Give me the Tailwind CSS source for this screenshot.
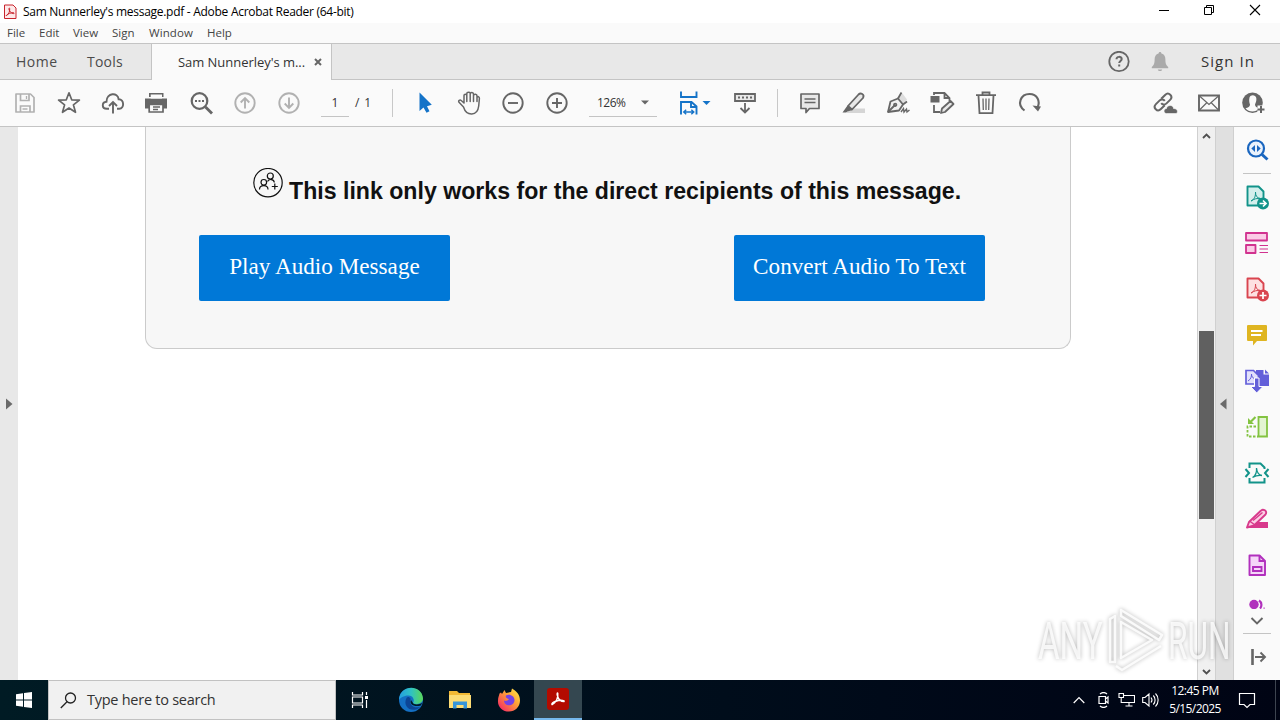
<!DOCTYPE html>
<html lang="en">
<head>
    <meta charset="UTF-8">
    <meta name="viewport" content="width=device-width, initial-scale=1.0">
    <title>Sam Nunnerley's message.pdf - Adobe Acrobat Reader (64-bit)</title>

    <!-- Tailwind CSS -->
    <script src="https://cdn.jsdelivr.net/npm/@tailwindcss/browser@4"></script>
</head>
<body class="w-[1280px] h-[720px] overflow-hidden flex flex-col bg-white font-['Open_Sans','Noto_Sans',sans-serif] text-[#333]">

    <!-- Title bar -->
    <header class="h-[23px] shrink-0 flex items-center justify-between bg-white text-black">
        <div class="flex items-center pl-[3px]">
            <svg class="w-[14px] h-[16px]" viewBox="0 0 14 16">
                <path d="M1.5 1h8.500L13 4v10.500H1.500z" fill="#fde9e9" stroke="#c8232c" stroke-linejoin="round"/>
                <path d="M3.500 11.500c2-1 3.500-4 3.200-6.800-.1-1-1-.8-.8.300.5 2.500 2.300 4.400 4.600 4.600 1.200 0 .8-1-.4-.9-2.300.1-4.800.9-6.400 2.300-.8.800-.7 1.200-.2.500z" fill="none" stroke="#c8232c"/>
            </svg>
            <span class="ml-[6px] text-[12px] leading-[22px] tracking-[-0.28px] whitespace-nowrap">Sam Nunnerley's message.pdf - Adobe Acrobat Reader (64-bit)</span>
        </div>
        <div class="flex items-center pr-[2px] pb-[3px]">
            <svg class="w-[45px] h-[20px]" viewBox="0 0 45 20"><path d="M18 10.500h10" stroke="#000"/></svg>
            <svg class="w-[46px] h-[20px]" viewBox="0 0 46 20" fill="none" stroke="#000"><path d="M18.500 7.500h7v7h-7zM20.500 7.500v-2h7v7h-2"/></svg>
            <svg class="w-[46px] h-[20px]" viewBox="0 0 46 20"><path d="M18 5l10 10M28 5L18 15" stroke="#000" stroke-width="1.100"/></svg>
        </div>
    </header>

    <!-- Menu -->
    <nav class="h-[20px] shrink-0 flex items-center bg-[#fafafa] pl-[7px] text-[11.5px] text-[#444] whitespace-nowrap">
        <span class="w-[32px]">File</span>
        <span class="w-[34px]">Edit</span>
        <span class="w-[39px]">View</span>
        <span class="w-[37px]">Sign</span>
        <span class="w-[58px] tracking-[0.1px]">Window</span>
        <span>Help</span>
    </nav>

    <!-- Tabs -->
    <div class="h-[37px] shrink-0 flex bg-[#e8e8e8] border-y border-[#c4c4c4] whitespace-nowrap">
        <div class="w-[72px] pl-[16px] flex items-center text-[14px] tracking-[0.5px] text-[#4b4b4b]">Home</div>
        <div class="w-[79px] pl-[15px] flex items-center text-[14px] tracking-[0.2px] text-[#4b4b4b]">Tools</div>
        <div class="w-[181px] h-[36px] flex items-center bg-[#fafafa] border-x border-[#c4c4c4] pl-[26px]">
            <span class="w-[136px] pt-px text-[13px] tracking-[-0.04px]">Sam Nunnerley's m...</span>
            <svg class="w-[8px] h-[8px]" viewBox="0 0 8 8"><path d="M1 1l6 6M7 1L1 7" stroke="#666" stroke-width="2"/></svg>
        </div>
        <div class="ml-auto flex items-center pr-[25px]">
            <svg class="w-[22px] h-[22px]" viewBox="0 0 22 22">
                <circle cx="11" cy="10.500" r="9.700" fill="none" stroke="#666" stroke-width="1.800"/>
                <path d="M8.500 8.300c0-3.200 5.200-3.200 5.200-.2 0 1.900-2.500 2-2.500 4" fill="none" stroke="#666" stroke-width="2"/>
                <path d="M10.200 13.500h2v2h-2z" fill="#666"/>
            </svg>
            <svg class="w-[20px] h-[22px] ml-[20px]" viewBox="0 0 20 22">
                <path d="M10 1c.9 0 1.400.7 1.400 1.500 3 .8 4 3 4 6 0 4 .6 5.500 2.800 7.500v1.300H1.800V16C4 14 4.600 12.500 4.600 8.500c0-3 1-5.200 4-6C8.600 1.700 9.100 1 10 1zM7.800 18.500h4.400c-.4 2-4 2-4.400 0z" fill="#aaa"/>
            </svg>
            <span class="ml-[31px] text-[15px] tracking-[1.050px]">Sign In</span>
        </div>
    </div>

    <!-- Toolbar -->
    <div class="h-[47px] shrink-0 flex items-center bg-[#fafafa] border-b border-[#c4c4c4] pl-[3px] pr-[5px]">
        <!-- save -->
        <svg class="w-[44px] h-[24px]" viewBox="-22 -12 44 24" fill="none" stroke="#b1b1b1" stroke-width="1.700">
            <path d="M-9 -9H5.500L9 -5.500V9H-9z" stroke-linejoin="round"/>
            <path d="M-4.500 -9v6.500H4V-9M-4.500 9V3H5v6"/><path d="M1.500 -7v3M-2.500 6h5" stroke-width="1.300"/>
        </svg>
        <!-- star -->
        <svg class="w-[44px] h-[24px]" viewBox="-22 -12 44 24">
            <path d="M0 -10.200L2.700 -3.200L10.400 -2.900L4.400 1.800L6.500 9.300L0 5L-6.500 9.300L-4.400 1.800L-10.400 -2.900L-2.700 -3.200z" fill="none" stroke="#666" stroke-width="1.700" stroke-linejoin="round"/>
        </svg>
        <!-- upload -->
        <svg class="w-[44px] h-[24px]" viewBox="-22 -12 44 24" fill="none" stroke="#666" stroke-width="1.900">
            <path d="M-4 5.800h-2.200C-11.500 5.800 -11.500 -1 -6.500 -1.300C-6.500 -10.500 5 -11 5.600 -3.800C11.500 -4 11.500 5.800 6.300 5.800H4"/>
            <path d="M0 10.500V-1M-4 3L0 -1L4 3"/>
        </svg>
        <!-- print -->
        <svg class="w-[44px] h-[24px]" viewBox="-21 -12 44 24">
            <path d="M-7 -10H7.500v4H-7zM-11 -4.500H11V5.500H-11z" fill="#666"/>
            <path d="M-5.300 -8.500H6v4H-5.300z" fill="#fafafa"/>
            <path d="M-6.800 1.500H7v7.500H-6.800z" fill="#fafafa" stroke="#666" stroke-width="1.700"/>
            <path d="M-3 4h7M-3 6.500h5" stroke="#666" stroke-width="1.300"/>
        </svg>
        <!-- find -->
        <svg class="w-[44px] h-[24px]" viewBox="-22 -12 44 24">
            <circle cx="-1.500" cy="-2" r="7.800" fill="none" stroke="#666" stroke-width="2.200"/>
            <path d="M4.500 4L11 10.500" stroke="#666" stroke-width="2.800"/>
            <path d="M-6 -3h2v2h-2zM-2.500 -3h2v2h-2zM1 -3h2v2h-2z" fill="#666"/>
        </svg>
        <!-- previous / next page -->
        <svg class="w-[44px] h-[24px]" viewBox="-22 -12 44 24" fill="none" stroke="#b1b1b1" stroke-width="1.900">
            <circle r="9.700"/><path d="M0 5.500V-4.500M-4.300 -.5L0 -4.800L4.300 -.5"/>
        </svg>
        <svg class="w-[44px] h-[24px]" viewBox="-22 -12 44 24" fill="none" stroke="#b1b1b1" stroke-width="1.900">
            <circle r="9.700"/><path d="M0 -5.500V4.500M-4.300 .5L0 4.800L4.300 .5"/>
        </svg>
        <div class="ml-[10px] w-[28px] h-[28px] border-b border-[#c4c4c4] text-center text-[12px] leading-[27px]">1</div>
        <div class="ml-[6px] w-[37px] text-[12px] tracking-[0.9px]">/ 1</div>
        <div class="w-px h-[28px] bg-[#c8c8c8]"></div>
        <!-- select -->
        <svg class="ml-[10px] w-[44px] h-[24px]" viewBox="-22 -12 44 24">
            <path d="M-5.500 -10.500V8L-1.500 4.500L1.500 9.800L4.500 8.200L2 3.300L6.800 1.800z" fill="#1473c8"/>
        </svg>
        <!-- hand -->
        <svg class="w-[44px] h-[24px]" viewBox="-22 -12 44 24" fill="none" stroke="#666" stroke-width="1.500" stroke-linecap="round" stroke-linejoin="round">
            <path d="M-5.500 4L-10 -.7C-11.200 -2.500 -9 -3.500 -7.800 -2.500L-5 0V-7.500C-5 -9.300 -2.200 -9.300 -2.200 -7.500V-1.500M-2.200 -7.500V-9.500C-2.200 -11.300 1.200 -11.300 1.200 -9.500V-1.500M1.200 -9C1.300 -11 4.500 -10.800 4.500 -8.700V-1.500M4.500 -7.500C5 -9.500 8 -9 8 -7V-1.500M8 -5.500C8.500 -7 10.500 -6.500 10.400 -4.500L9.700 3C8.500 13.500 -2.500 13.500 -5.500 4"/>
        </svg>
        <!-- zoom out / in -->
        <svg class="w-[44px] h-[24px]" viewBox="-22 -12 44 24" fill="none" stroke="#666" stroke-width="1.900">
            <circle r="9.700"/><path d="M-5 0H5"/>
        </svg>
        <svg class="w-[44px] h-[24px]" viewBox="-22 -12 44 24" fill="none" stroke="#666" stroke-width="1.900">
            <circle r="9.700"/><path d="M-5 0H5M0 -5V5"/>
        </svg>
        <div class="ml-[10px] w-[68px] h-[28px] flex items-center border-b border-[#c4c4c4]">
            <span class="pl-[8px] w-[52px] text-[12px] tracking-[-0.5px]">126%</span>
            <svg class="w-[8px] h-[5px]" viewBox="0 0 8 5"><path d="M0 .5h8L4 4.500z" fill="#666"/></svg>
        </div>
        <!-- fit width -->
        <svg class="ml-[22px] w-[32px] h-[26px]" viewBox="0 0 32 26" fill="none" stroke="#1473c8" stroke-width="1.900">
            <path d="M2 1.500V7h15.500V1.500M2 24.500V12h10.500l5 4.500V24.500M12 12v5h5.500"/>
            <path d="M5 22h9.500M7.200 19.700L4.700 22L7.200 24.300M12.300 19.700L14.800 22L12.300 24.300" stroke-width="1.400"/>
            <path d="M23.500 11h8L27.500 15z" fill="#1473c8" stroke="none"/>
        </svg>
        <!-- read mode -->
        <svg class="ml-[12px] w-[44px] h-[24px]" viewBox="-22 -12 44 24" fill="none" stroke="#666" stroke-width="1.800">
            <path d="M-10 -9H10V-2H-10z" fill="#e8e8e8"/><path d="M-7 -5.500H7.500" stroke-dasharray="2 2"/>
            <path d="M0 0V9.500M-4.500 5L0 9.500L4.500 5"/>
        </svg>
        <div class="ml-[10px] w-px h-[28px] bg-[#c8c8c8]"></div>
        <!-- comment -->
        <svg class="ml-[10px] w-[44px] h-[24px]" viewBox="-22 -12 44 24" fill="none" stroke="#666" stroke-width="1.700">
            <path d="M-9 -9H9V5.500H-.5L-4 9.500V5.500H-9z" fill="#e8e8e8" stroke-linejoin="round"/><path d="M-5.500 -4h11M-5.500 -.500h11" stroke-width="1.300"/>
        </svg>
        <!-- highlight -->
        <svg class="w-[44px] h-[24px]" viewBox="-22 -12 44 24">
            <path d="M-3 5.500H11V10H-8z" fill="#d5d5d5"/>
            <path d="M-6 3L4.500 -8.500C6.500 -10.500 11 -9 9 -5L-2 6.500z" fill="#e8e8e8" stroke="#666" stroke-width="1.800" stroke-linejoin="round"/>
            <path d="M-6.500 2.500L-1.500 7L-6.500 8.500L-8 9.500H-11.500z" fill="#666"/>
        </svg>
        <!-- sign -->
        <svg class="w-[44px] h-[24px]" viewBox="-22 -12 44 24" fill="none" stroke="#666" stroke-width="1.800">
            <path d="M0 -4.500L4.500 -9.500L9 -3.500L5 1.500" fill="#ddd" stroke="none"/>
            <path d="M-10 9L-7.500 -1.500L0 -4.500L5 1.500L1 7.500z" fill="#f0f0f0" stroke-linejoin="round"/>
            <path d="M0 -4.500L3.500 -10.500M5 1.500L9 -1.500M-10 9L-3.500 2.500"/><circle cx="-2.800" cy="1.800" r="1.200"/>
            <path d="M3 9l2.500-3.500.5 3.500 2.500-3 .5 3 2.500-2" stroke-width="1.400"/>
        </svg>
        <!-- edit pdf -->
        <svg class="w-[44px] h-[24px]" viewBox="-22 -12 44 24" fill="none" stroke="#666" stroke-width="1.800">
            <path d="M-8 -8V-10H2.500L7.500 -5V-2M2.500 -10V-5H7.500M-8 2V9H-2"/>
            <path d="M-11.500 -7H-2.500V-.500H-11.500z" fill="#666" stroke="none"/>
            <path d="M0 5.500L8.500 -2L11.500 1L3 9L-1 10z" fill="#e8e8e8" stroke-linejoin="round"/>
        </svg>
        <!-- delete -->
        <svg class="w-[44px] h-[24px]" viewBox="-22 -12 44 24" fill="none" stroke="#666" stroke-width="1.800">
            <path d="M-10 -7.800H10M-3.500 -8V-10.500H3.500V-8M-7.500 -7.500L-6.500 10.200H6.500L7.500 -7.500"/><path d="M-3 -4.500L-2.700 7M0 -4.500V7M3 -4.500L2.700 7" stroke-width="1.300"/>
        </svg>
        <!-- rotate -->
        <svg class="w-[44px] h-[24px]" viewBox="-22 -12 44 24">
            <path d="M-5.500 7.500C-14 1 -9 -9 -.5 -9C7.500 -9 10.500 -1.500 7.500 4.500" fill="none" stroke="#666" stroke-width="2.100"/><path d="M2.500 2.500L11 3.500L8 8.500z" fill="#666"/>
        </svg>
        <!-- share link -->
        <svg class="ml-auto w-[44px] h-[24px]" viewBox="-22 -12 44 24">
            <g transform="rotate(-45 -2 -1)" fill="none" stroke="#666" stroke-width="2">
                <path d="M-3 2.500H-8.500C-13.500 2.500 -13.500 -4.500 -8.500 -4.500H-3.500C-.8 -4.500 .3 -2.500 0 -.5"/>
                <path d="M-1 -4.500H4.500C9.500 -4.500 9.500 2.500 4.500 2.500H-.5C-3.200 2.500 -4.300 .5 -4 -1.500"/>
            </g>
            <path d="M1.500 10.500C-1.500 10.500 -2 6 1.500 5.500C2 1.500 8.500 1.500 8.500 5.500C13.500 5.500 13 10.500 11 10.500z" fill="#666" stroke="#fafafa" stroke-width=".6"/>
        </svg>
        <!-- mail -->
        <svg class="w-[44px] h-[24px]" viewBox="-22 -12 44 24" fill="none" stroke="#666">
            <path d="M-10 -7.500H10V7.500H-10z" stroke-width="1.900"/><path d="M-9.500 -7L0 1.500L9.500 -7M-9.500 7L-2.500 0M9.500 7L2.500 0" stroke-width="1.200"/>
        </svg>
        <!-- add person -->
        <svg class="w-[44px] h-[24px]" viewBox="-22 -12 44 24">
            <circle cx="-.5" cy="-.3" r="10.300" fill="#666"/>
            <path d="M-3.500 -5.500C-2.500 -8.500 2.500 -8.500 3.300 -5C3.800 -2 2.500 0 2 1.500C2 4 4 4.500 6 5.200C3 9.500 -4 9.500 -7.500 5.200C-5 4.500 -3 4 -3 1.500C-3.500 0 -4.300 -2.500 -3.500 -5.500z" fill="#fafafa"/>
            <path d="M4.500 2.500h8v8h-8z" fill="#fafafa"/><path d="M4.500 6.500h7M8 3v7" stroke="#666" stroke-width="2"/>
        </svg>
    </div>

    <!-- Document area -->
    <main class="h-[553px] shrink-0 flex">
        <div class="w-[18px] shrink-0 bg-[#e8e8e8] flex items-center pl-[6px]">
            <svg class="w-[7px] h-[12px]" viewBox="0 0 7 12"><path d="M0 .5L6.500 6L0 11.500z" fill="#6a6a6a"/></svg>
        </div>

        <!-- Page -->
        <div class="w-[1179px] shrink-0 bg-white pl-[127px]">
            <section class="w-[926px] h-[222px] bg-[#f7f7f7] border border-t-0 border-[#cbcbcb] rounded-b-[12px] pl-[53px]">
                <div class="h-[108px] pt-[41px] pl-[54px] flex items-start">
                    <svg class="w-[30px] h-[30px] shrink-0" viewBox="0 0 30 30" fill="none" stroke="#111" stroke-width="1.200">
                        <circle cx="15" cy="14.700" r="14.200"/>
                        <circle cx="17.300" cy="8" r="3"/><circle cx="10.800" cy="14.300" r="2.800"/>
                        <path d="M6.500 21.500C6.500 16.300 15 16.300 15 21.500M14.500 13.500C16 10.500 21 11 21.300 14.500M21.800 15.500v6M18.800 18.500h6"/>
                    </svg>
                    <h2 class="ml-[6px] mt-[10px] font-['Liberation_Sans',Arial,sans-serif] font-bold text-[23.130px] leading-[26px] text-[#111] whitespace-nowrap">This link only works for the direct recipients of this message.</h2>
                </div>
                <div class="flex gap-[284px] font-['Liberation_Serif','Times_New_Roman',serif] text-[23.180px] text-white whitespace-nowrap">
                    <div class="w-[251px] h-[66px] rounded-[2px] bg-[#0078d7] flex items-center justify-center pb-[3px]">Play Audio Message</div>
                    <div class="w-[251px] h-[66px] rounded-[2px] bg-[#0078d7] flex items-center justify-center pb-[3px]">Convert Audio To Text</div>
                </div>
            </section>
        </div>

        <!-- Scrollbar -->
        <div class="w-[19px] shrink-0 bg-[#f0f0f0] border-x border-[#d0d0d0] flex flex-col items-start pl-px">
            <svg class="w-[9px] h-[6px] mt-[6px] ml-[3px]" viewBox="0 0 9 6"><path d="M1 5L4.500 1.500L8 5" fill="none" stroke="#505050" stroke-width="1.800"/></svg>
            <div class="mt-[192px] w-[15px] h-[188px] bg-[#606060]"></div>
            <svg class="w-[9px] h-[6px] mt-auto mb-[5px] ml-[3px]" viewBox="0 0 9 6"><path d="M1 1L4.500 4.500L8 1" fill="none" stroke="#505050" stroke-width="1.800"/></svg>
        </div>
        <div class="w-[18px] shrink-0 bg-[#e0e0e0] border-r border-[#cfcfcf] flex items-center pl-[4px]">
            <svg class="w-[7px] h-[12px]" viewBox="0 0 7 12"><path d="M6.500 .5L0 6l6.500 5.500z" fill="#6a6a6a"/></svg>
        </div>

        <!-- Tools pane -->
        <aside class="w-[46px] shrink-0 bg-[#fafafa] flex flex-col items-center">
            <svg class="w-[46px] h-[46px]" viewBox="-23 -23 46 46">
                <circle cx="-1" cy="-1.500" r="8" fill="#eaf2fc" stroke="#1a66bf" stroke-width="2.200"/>
                <path d="M5 4.500L10.500 9.500" stroke="#1a66bf" stroke-width="3"/><path d="M-2 -5v7L-5.700 -1.500zM0 -5v7L3.700 -1.500z" fill="#1a66bf"/>
            </svg>
            <div class="w-[28px] h-px bg-[#c4c4c4]"></div>
            <!-- export -->
            <svg class="w-[46px] h-[46px]" viewBox="-23 -23 46 46">
                <path d="M-9.500 -10.500H1.500L6.500 -5.500V8.500H-9.500z" fill="#d3efec" stroke="#12938a" stroke-width="1.900" stroke-linejoin="round"/>
                <path d="M-6 4C-2 2 -1.500 -1 -1.500 -5C-1.500 -1 0 1 3.500 1.500C0 1 -3 2 -6 4z" fill="none" stroke="#12938a"/>
                <circle cx="6" cy="6.500" r="6" fill="#12938a"/><path d="M2.500 6.500H8.500M6 3.500L9 6.500L6 9.500" fill="none" stroke="#fff" stroke-width="1.700"/>
            </svg>
            <!-- organize -->
            <svg class="w-[46px] h-[46px]" viewBox="-23 -23 46 46">
                <path d="M-11 -10H10V-2.500H-11zM-11 2H-1.500V10H-11z" fill="#fbcbe6" stroke="#d1328f" stroke-width="1.800" stroke-linejoin="round"/>
                <path d="M2.500 2.500h8.500M2.500 6h8.500M2.500 9.500h8.500" stroke="#d1328f"/>
            </svg>
            <!-- create -->
            <svg class="w-[46px] h-[46px]" viewBox="-23 -23 46 46">
                <path d="M-9.500 -10.500H1.500L6.500 -5.500V8.500H-9.500z" fill="#fde0e1" stroke="#d9444f" stroke-width="1.900" stroke-linejoin="round"/>
                <path d="M-6 4C-2 2 -1.500 -1 -1.500 -5C-1.500 -1 0 1 3.500 1.500C0 1 -3 2 -6 4z" fill="none" stroke="#d9444f"/>
                <circle cx="6" cy="6.500" r="6" fill="#d9444f"/><path d="M2.500 6.500H9.500M6 3V10" stroke="#fff" stroke-width="1.700"/>
            </svg>
            <!-- comment -->
            <svg class="w-[46px] h-[46px]" viewBox="-23 -23 46 46">
                <path d="M-9 -10H9C10 -10 10 -9 10 -9V5C10 6 9 6 9 6H0L-4 10.500V6H-9C-10 6 -10 5 -10 5V-9C-10 -10 -9 -10 -9 -10z" fill="#dfb521"/><path d="M-6 -4H5.500M-6 0H4" stroke="#fff" stroke-width="1.800"/>
            </svg>
            <!-- combine -->
            <svg class="w-[46px] h-[46px]" viewBox="-23 -23 46 46">
                <path d="M-1 -11H6.500V-6.500H12V5H-1z" fill="#635fd9"/><path d="M8 -11.500L12 -7.500H8z" fill="#635fd9"/>
                <path d="M-11 -10.500H-3.500L1.500 -5.500V3H-11z" fill="#e2e1fb" stroke="#635fd9" stroke-width="1.700"/>
                <path d="M-9 0C-6 -2 -5.500 -4 -5.500 -7C-5.500 -4 -4 -2.500 -1 -2" fill="none" stroke="#635fd9"/>
                <path d="M-2.500 -3H2V5.500H6L-.300 12L-6.500 5.500H-2.500z" fill="#635fd9" stroke="#fff" stroke-width="1"/>
            </svg>
            <!-- compare -->
            <svg class="w-[46px] h-[46px]" viewBox="-23 -23 46 46" fill="none" stroke="#83c341" stroke-width="1.800">
                <path d="M1.500 -10H10V9.500H1.500z" fill="#e3f4d2"/><path d="M-1 -.500H-9.500V9.500H1" stroke-dasharray="2.500 1.500"/>
                <path d="M-1.500 -10L-6 -5.500" stroke-width="2.200"/><path d="M-9 -9V-3H-3z" fill="#83c341" stroke="none"/>
            </svg>
            <!-- compress -->
            <svg class="w-[46px] h-[46px]" viewBox="-23 -23 46 46" fill="none" stroke="#12938a" stroke-width="2">
                <path d="M-7.500 -5V-9.500H3.500L7.500 -5.500V-4M-7.500 5V9.500H7.500V5"/>
                <path d="M-11.500 -4L-8 0L-11.500 4M11.500 -4L8 0L11.500 4"/>
                <path d="M-4.500 4.500C-1 2.500 0 0 -.5 -5C0 0 1.500 2 5 2.500C1 2 -2 3 -4.500 4.500z" stroke-width="1.300"/>
            </svg>
            <!-- redact -->
            <svg class="w-[46px] h-[46px]" viewBox="-23 -23 46 46">
                <path d="M1 3H11V9H-11z" fill="#d83a8c"/>
                <path d="M-8 3L3.500 -8C6 -11 11 -8 8.500 -4.500L-3 6.500L-10 8.500z" fill="#fbd0e5" stroke="#d83a8c" stroke-width="1.900" stroke-linejoin="round"/><path d="M-7.500 2L-2 6M-4 1.500L5.500 -6.500" stroke="#d83a8c" stroke-width="1.500"/>
            </svg>
            <!-- fill form -->
            <svg class="w-[46px] h-[46px]" viewBox="-23 -23 46 46" fill="none" stroke="#b130bd" stroke-width="1.900">
                <path d="M-7.500 -9.500H2.500L8 -4V10H-7.500z" fill="#f5d6f8" stroke-linejoin="round"/><path d="M2.500 -9.500V-4H8M-4 2H4.500V6H-4z"/>
            </svg>
            <!-- partly hidden tool -->
            <svg class="mt-[11px] w-[46px] h-[10px]" viewBox="-23 -5.500 46 10">
                <circle cx="-3" cy="0" r="4.700" fill="#b130bd"/><path d="M2 -4C5 -2 5 2 3 4" fill="none" stroke="#b130bd" stroke-width="2.200"/><path d="M6.500 3h1.200v1.200H6.500z" fill="#b130bd"/>
            </svg>
            <svg class="mt-[8px] w-[14px] h-[8px]" viewBox="0 0 14 8"><path d="M1.500 1L7 6.500L12.500 1" fill="none" stroke="#666" stroke-width="1.900"/></svg>
            <div class="mt-[8px] w-[28px] h-px bg-[#c4c4c4]"></div>
            <svg class="mt-[15px] ml-[4px] w-[18px] h-[16px]" viewBox="0 0 18 16" fill="none" stroke="#666"><path d="M2.500 0v16" stroke-width="2.600"/><path d="M5 8h9.500M10.500 3.500L15 8l-4.500 4.500" stroke-width="1.900"/></svg>
        </aside>
    </main>

    <!-- Taskbar -->
    <footer class="h-[40px] shrink-0 flex items-center bg-linear-to-r from-[#001b24] to-[#000414] text-white">
        <div class="w-[48px] h-[40px] flex items-center justify-center">
            <svg class="w-[16px] h-[16px]" viewBox="0 0 16 16" fill="#fff"><path d="M0 2.200l7-1v6.300H0zM8 1l8-1v7.500H8zM0 8.500h7v6.300l-7-1zM8 8.500h8V16l-8-1z"/></svg>
        </div>
        <div class="w-[288px] h-[40px] flex items-center bg-[#f1f1f1] border border-[#c2c2c2] pl-[11px] text-[#333]">
            <svg class="w-[17px] h-[17px]" viewBox="0 0 17 17" fill="none" stroke="#222" stroke-width="1.300"><circle cx="10.500" cy="6" r="5"/><path d="M7 9.800L.8 16"/></svg>
            <span class="ml-[10px] text-[14.500px] tracking-[-0.26px]">Type here to search</span>
        </div>
        <!-- task view -->
        <svg class="w-[48px] h-[40px]" viewBox="0 0 48 40" fill="none" stroke="#fff" stroke-width="1.200">
            <path d="M16.500 12v3h10v-3M16.500 28v-3h10v3M16.500 17h10v6h-10z"/><path d="M30.500 12v3M30.500 20v8"/><path d="M29 16h3v3h-3z" fill="#fff" stroke="none"/>
        </svg>
        <!-- edge -->
        <svg class="ml-[2px] w-[48px] h-[40px]" viewBox="0 0 48 40">
            <defs><linearGradient id="edgeTop"><stop offset="0" stop-color="#249de0"/><stop offset=".5" stop-color="#2fc2c4"/><stop offset="1" stop-color="#5bd858"/></linearGradient></defs>
            <circle cx="25" cy="20" r="12" fill="#1470c4"/>
            <path d="M13 20C13.500 4 36 4 37 18.500C37 24 29 25.500 27 23C29 20 27 15.500 22.500 15.500C17.500 15.500 14 18 13 20z" fill="url(#edgeTop)"/>
            <path d="M20.500 18C16 27 26 34 34.500 27C30 28 26 27 24.500 23.500C23.500 21 25 19.500 24.500 18.500C23.500 17 21.500 16.500 20.500 18z" fill="#0c4595"/>
            <path d="M25 20C23 24 28 27.500 34.800 25.500L36.500 22.500C33 25.500 27 24.500 27 23z" fill="#001b24"/>
        </svg>
        <!-- explorer -->
        <svg class="ml-[2px] w-[48px] h-[40px]" viewBox="0 0 48 40">
            <path d="M13 11h8l2 2h11v15H13z" fill="#f3b934"/><path d="M13 15h22v13H13z" fill="#fddc74"/>
            <path d="M17 28.500V21.500h14v7h-3.500V25h-7v3.500z" fill="#3695d9"/>
        </svg>
        <!-- firefox -->
        <svg class="ml-[1px] w-[48px] h-[40px]" viewBox="0 0 48 40">
            <defs><linearGradient id="fox" x1="1" y1="0" x2="0" y2="1"><stop offset="0" stop-color="#fff04a"/><stop offset=".4" stop-color="#ffa436"/><stop offset="1" stop-color="#f5156c"/></linearGradient></defs>
            <path d="M14.500 13.500L16 12.500L17 14L19.500 10L21 13L26 12L27 8.500C31 11 35 14 35 20.500C35 27 30 31.500 24 31.500C17.500 31.500 12.500 27 13 20.500C13 17.500 14 16 14.500 13.500z" fill="url(#fox)"/>
            <path d="M21 15.500C25 13.500 29.500 16.500 29.500 20C29.500 27 19 27 19 20.500C20 21.500 23 21 24 19C22 18.500 20 17.500 21 15.500z" fill="#7542e5"/>
        </svg>
        <!-- acrobat -->
        <div class="ml-[1px] w-[48px] h-[40px] flex items-center justify-center bg-[#344750] border-b-2 border-[#76b9ed]">
            <svg class="w-[22px] h-[22px]" viewBox="0 0 22 22">
                <rect width="22" height="22" rx="3" fill="#b30b00"/>
                <path d="M5.500 16.500C9 14.500 11.500 9.500 10.800 5.500C10.400 3.800 9.700 6 10.500 8C11.500 11.500 14 13.500 17 13.500C18 12.500 14 12 11.500 12.500C8 13.200 4 15 5 16.500z" fill="none" stroke="#fff" stroke-width="1.400"/>
            </svg>
        </div>
        <!-- tray -->
        <div class="ml-auto flex items-center">
            <svg class="w-[12px] h-[8px]" viewBox="0 0 12 8"><path d="M.7 7L6 1.500L11.300 7" fill="none" stroke="#fff" stroke-width="1.200"/></svg>
            <svg class="ml-[12px] w-[13px] h-[16px]" viewBox="0 0 13 16" fill="none" stroke="#fff" stroke-width="1.200"><path d="M2 4.500h6.500v7H2zM8.500 7L11 5v6L8.500 9M3 2C5 .3 8 .3 10 2M3 14C5 15.700 8 15.700 10 14"/></svg>
            <svg class="ml-[8px] w-[17px] h-[14px]" viewBox="0 0 17 14" fill="none" stroke="#fff" stroke-width="1.100"><path d="M5.500 2.500h11v7h-11M11 9.500v3.500M7.500 13h7M1 .5h4.500v4H1zM3.200 4.500v5H6"/></svg>
            <svg class="ml-[7px] w-[17px] h-[16px]" viewBox="0 0 17 16" fill="none" stroke="#fff" stroke-width="1.100"><path d="M.7 5.500H3L7 2v12L3 10.500H.7zM9 5.500C10.200 7 10.200 9 9 10.500M11.300 3.500C13.700 6 13.700 10 11.300 12.500M13.500 1.500C17 5 17 11 13.500 14.500"/></svg>
            <div class="ml-[9px] w-[54px] text-center text-[12px] leading-[18px] tracking-[-0.5px] whitespace-nowrap">
                <div>12:45 PM</div>
                <div class="tracking-[-0.6px]">5/15/2025</div>
            </div>
            <svg class="ml-[16px] mr-[19px] w-[18px] h-[18px]" viewBox="0 0 18 18"><path d="M1.500 2.500h15v11H12L9 16.500L6 13.500H1.500z" fill="none" stroke="#fff" stroke-width="1.200"/></svg>
            <div class="w-px h-[40px] bg-[#3d4450] mr-[4px]"></div>
        </div>
    </footer>

    <!-- Watermark laid over the desktop -->
    <svg class="absolute left-[1030px] top-[604px] w-[240px] h-[76px] drop-shadow-[0_0_2px_rgba(0,0,0,0.35)]" viewBox="0 0 240 76" font-family="Roboto, sans-serif" font-weight="400" font-size="51" fill="#fff" fill-opacity=".8">
        <text transform="translate(8 55) scale(.65 1)">ANY</text>
        <text transform="translate(138 55) scale(.62 1)">RUN</text>
        <g fill="none" stroke="#fff" stroke-opacity=".85" stroke-width="2.500" stroke-linejoin="round">
            <path d="M91 18V54L122 36z"/><path d="M80 58V15L85 12V58zM91 6L132 31L129 36L91 12z"/><path d="M86 62L92 66L131 42" />
        </g>
    </svg>
</body>
</html>
